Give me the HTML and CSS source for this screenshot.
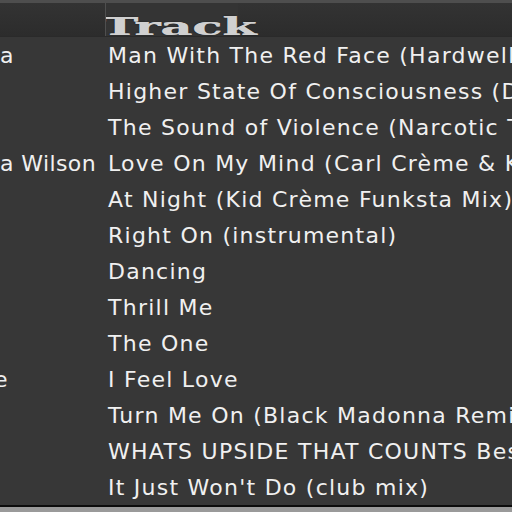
FILE: index.html
```html
<!DOCTYPE html>
<html>
<head>
<meta charset="utf-8">
<link rel="stylesheet" href="styles.css">
</head>
<body>
<div class="view">
  <div class="topline"></div>
  <div class="header">
    <div class="hcell artist-h"></div>
    <div class="hcell track-h"><span class="sortbg"></span><span class="htext">Track</span></div>
  </div>
  <div class="rows">
    <div class="row"><div class="artist">a</div><div class="track">Man With The Red Face (Hardwell Remix)</div></div>
    <div class="row"><div class="artist"></div><div class="track">Higher State Of Consciousness (Dirty Mix)</div></div>
    <div class="row"><div class="artist"></div><div class="track">The Sound of Violence (Narcotic Thrust Mix)</div></div>
    <div class="row"><div class="artist">a Wilson</div><div class="track">Love On My Mind (Carl Crème &amp; Kid Crème Mix)</div></div>
    <div class="row"><div class="artist"></div><div class="track">At Night (Kid Crème Funksta Mix)</div></div>
    <div class="row"><div class="artist"></div><div class="track">Right On (instrumental)</div></div>
    <div class="row"><div class="artist"></div><div class="track">Dancing</div></div>
    <div class="row"><div class="artist"></div><div class="track">Thrill Me</div></div>
    <div class="row"><div class="artist"></div><div class="track">The One</div></div>
    <div class="row"><div class="artist"><span class="clip-e">e</span></div><div class="track">I Feel Love</div></div>
    <div class="row"><div class="artist"></div><div class="track">Turn Me On (Black Madonna Remix)</div></div>
    <div class="row"><div class="artist"></div><div class="track">WHATS UPSIDE THAT COUNTS Best Mix</div></div>
    <div class="row"><div class="artist"></div><div class="track">It Just Won't Do (club mix)</div></div>
  </div>
  <div class="bottom"></div>
</div>
</body>
</html>
```
FILE: styles.css
```css
html, body {
  margin: 0;
  padding: 0;
  background: #373737;
  overflow: hidden;
}
.view {
  width: 512px;
  height: 512px;
  display: flex;
  flex-direction: column;
  background: #373737;
  overflow: hidden;
}
.topline {
  height: 3px;
  background: #4e4e4e;
  flex: none;
}
.header {
  height: 33px;
  flex: none;
  display: flex;
  background: linear-gradient(#333333, #2c2c2c);
  border-bottom: 1px solid #2a2a2a;
}
.hcell {
  height: 100%;
  position: relative;
  overflow: hidden;
}
.artist-h {
  width: 105px;
  flex: none;
  border-right: 1px solid #4f4f4f;
}
.track-h {
  flex: 1;
}
.sortbg {
  position: absolute;
  left: 0;
  top: 0;
  width: 132px;
  height: 100%;
  background: #343434;
}
.htext {
  position: absolute;
  left: -5px;
  top: 10px;
  font-family: "DejaVu Serif", serif;
  font-weight: 900;
  font-size: 25px;
  line-height: 28px;
  color: #d0d0d0;
  transform: scaleX(1.97);
  transform-origin: left center;
  text-shadow: 0.5px 0 0 #d0d0d0, 0 0 1px #111111;
}
.rows {
  flex: 1;
  display: flex;
  flex-direction: column;
}
.row {
  height: 36px;
  flex: none;
  display: flex;
  align-items: center;
  font-family: "DejaVu Sans", Verdana, sans-serif;
  font-size: 22px;
  letter-spacing: 1.25px;
  color: #f0f0f0;
  white-space: nowrap;
}
.artist {
  width: 106px;
  flex: none;
  overflow: hidden;
  letter-spacing: 0.4px;
}
.track {
  padding-left: 2px;
  overflow: hidden;
}
.clip-e {
  display: inline-block;
  margin-left: -6px;
}
.bottom {
  height: 8px;
  flex: none;
  border-top: 2px solid #0c0c0c;
  background: #9a9a9a;
}
```
